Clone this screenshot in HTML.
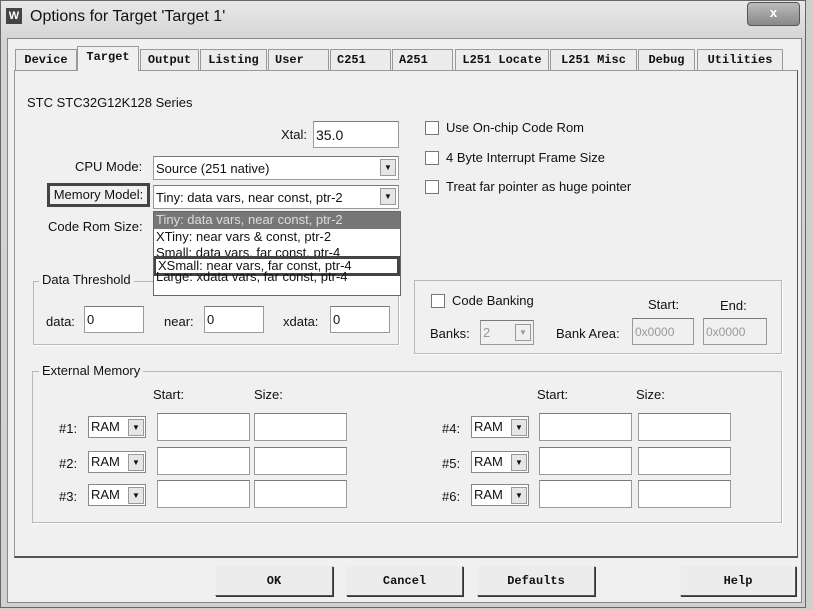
<!DOCTYPE html><html><head><style>
body{margin:0;width:813px;height:610px;background:#cfcfcf;position:relative;overflow:hidden;font-family:"Liberation Sans",sans-serif;font-size:13px;color:#111}
.a{position:absolute}
.inp{position:absolute;background:#fff;border:1px solid #9a9a9a;border-top-color:#7a7a7a;box-sizing:border-box;padding:0 2px;font-size:13px;display:flex;align-items:center}
.cb{position:absolute;width:12px;height:12px;background:#fff;border:1px solid #777}
.gb{position:absolute;border:1px solid #b8b8b8;box-shadow:1px 1px 0 #fff}
.lg{position:absolute;background:#f0f0f0;padding:0 3px}
.tab{position:absolute;top:49px;height:21px;border:1px solid #999;border-bottom:none;background:#ececec;font-family:"Liberation Mono",monospace;font-size:12px;line-height:20px;text-align:center;box-sizing:border-box;font-weight:bold}
.btn{position:absolute;top:566px;height:30px;border:1px solid #555;border-top-color:#eee;border-left-color:#eee;box-shadow:1px 1px 0 #333;background:#ececec;font-family:"Liberation Mono",monospace;font-size:12px;line-height:28px;text-align:center;box-sizing:border-box;font-weight:bold}
.dd{position:absolute;width:16px;height:17px;background:#e6e6e6;border:1px solid #999;box-sizing:border-box;font-size:8px;text-align:center;line-height:16px}
.ram{position:absolute;width:58px;height:22px;border:1px solid #888;background:#fff;box-sizing:border-box;padding:2px 2px;font-size:13px}
.ram .dd{right:1px;top:2px}
</style></head><body>
<div class="a" style="left:0;top:0;width:806px;height:608px;background:linear-gradient(#e8e8e8,#d4d4d4 40px,#d0d0d0);border:1px solid #666;box-sizing:border-box"></div>
<div class="a" style="left:6px;top:8px;width:16px;height:16px;background:#444;color:#fff;font-size:11px;text-align:center;line-height:16px;font-weight:bold">W</div>
<div class="a" style="left:30px;top:8px;font-size:16px;color:#111">Options for Target 'Target 1'</div>
<div class="a" style="left:747px;top:2px;width:51px;height:22px;border:1px solid #555;border-radius:4px;background:linear-gradient(#bbb,#888);color:#fff;font-weight:bold;text-align:center;line-height:20px;font-size:13px">x</div>
<div class="a" style="left:7px;top:38px;width:795px;height:565px;background:#f0f0f0;border:1px solid #888;box-sizing:border-box"></div>
<div class="a" style="left:14px;top:70px;width:784px;height:488px;border:1px solid #999;border-right-color:#555;border-bottom:2px solid #555;box-sizing:border-box;background:#f0f0f0"></div>
<div class="tab" style="left:15px;width:62px">Device</div>
<div class="tab" style="left:77px;width:62px;top:46px;height:25px;background:#f0f0f0;z-index:2">Target</div>
<div class="tab" style="left:140px;width:59px">Output</div>
<div class="tab" style="left:200px;width:67px">Listing</div>
<div class="tab" style="left:268px;width:61px;text-align:left;padding-left:6px">User</div>
<div class="tab" style="left:330px;width:61px;text-align:left;padding-left:6px">C251</div>
<div class="tab" style="left:392px;width:61px;text-align:left;padding-left:6px">A251</div>
<div class="tab" style="left:455px;width:94px">L251 Locate</div>
<div class="tab" style="left:550px;width:87px">L251 Misc</div>
<div class="tab" style="left:638px;width:57px">Debug</div>
<div class="tab" style="left:697px;width:86px">Utilities</div>

<div class="a" style="left:27px;top:95px">STC STC32G12K128 Series</div>
<div class="a" style="left:281px;top:127px">Xtal:</div>
<div class="inp" style="left:313px;top:121px;width:86px;height:27px;font-size:14px">35.0</div>
<div class="a" style="left:75px;top:159px">CPU Mode:</div>
<div class="inp" style="left:153px;top:156px;width:246px;height:24px">Source (251 native)<div class="dd" style="right:2px;top:2px">▼</div></div>
<div class="a" style="left:47px;top:183px;width:103px;height:24px;border:3px solid #444;box-sizing:border-box;text-align:center;line-height:18px">Memory Model:</div>
<div class="inp" style="left:153px;top:185px;width:246px;height:24px">Tiny: data vars, near const, ptr-2<div class="dd" style="right:2px;top:2px">▼</div></div>
<div class="a" style="left:48px;top:219px">Code Rom Size:</div>
<div class="gb" style="left:33px;top:281px;width:364px;height:62px"></div>
<div class="lg" style="left:39px;top:272px">Data Threshold</div>
<div class="a" style="left:46px;top:314px">data:</div>
<div class="inp" style="left:84px;top:306px;width:60px;height:27px">0</div>
<div class="a" style="left:164px;top:314px">near:</div>
<div class="inp" style="left:204px;top:306px;width:60px;height:27px">0</div>
<div class="a" style="left:283px;top:314px">xdata:</div>
<div class="inp" style="left:330px;top:306px;width:60px;height:27px">0</div>
<div class="a" style="left:153px;top:211px;width:248px;height:85px;background:#fff;border:1px solid #666;box-sizing:border-box;font-size:13px;line-height:15px;overflow:hidden">
<div style="background:#777;color:#ddd;padding-left:2px;height:17px">Tiny: data vars, near const, ptr-2</div>
<div style="padding-left:2px;height:16px">XTiny: near vars &amp; const, ptr-2</div>
<div style="padding-left:2px;height:11px;overflow:hidden">Small: data vars, far const, ptr-4</div>
<div style="padding-left:2px;border:3px solid #444;margin-left:-1px;height:20px;box-sizing:border-box;line-height:14px">XSmall: near vars, far const, ptr-4</div>
<div style="padding-left:2px;margin-top:-7px">Large: xdata vars, far const, ptr-4</div>
</div>

<div class="cb" style="left:425px;top:121px"></div><div class="a" style="left:446px;top:120px">Use On-chip Code Rom</div>
<div class="cb" style="left:425px;top:151px"></div><div class="a" style="left:446px;top:150px">4 Byte Interrupt Frame Size</div>
<div class="cb" style="left:425px;top:180px"></div><div class="a" style="left:446px;top:179px">Treat far pointer as huge pointer</div>

<div class="gb" style="left:414px;top:280px;width:366px;height:72px"></div>
<div class="cb" style="left:431px;top:294px"></div><div class="a" style="left:452px;top:293px">Code Banking</div>
<div class="a" style="left:648px;top:297px">Start:</div><div class="a" style="left:720px;top:298px">End:</div>
<div class="a" style="left:430px;top:326px">Banks:</div>
<div class="inp" style="left:480px;top:320px;width:54px;height:25px;background:#f0f0f0;color:#999">2<div class="dd" style="right:2px;top:3px;color:#999;background:#f0f0f0">▼</div></div>
<div class="a" style="left:556px;top:326px">Bank Area:</div>
<div class="inp" style="left:632px;top:318px;width:62px;height:27px;background:#f0f0f0;color:#999;font-size:12px">0x0000</div>
<div class="inp" style="left:703px;top:318px;width:64px;height:27px;background:#f0f0f0;color:#999;font-size:12px">0x0000</div>

<div class="gb" style="left:32px;top:371px;width:748px;height:150px"></div>
<div class="lg" style="left:39px;top:363px">External Memory</div>
<div class="a" style="left:153px;top:387px">Start:</div><div class="a" style="left:254px;top:387px">Size:</div>
<div class="a" style="left:537px;top:387px">Start:</div><div class="a" style="left:636px;top:387px">Size:</div>

<div class="a" style="left:59px;top:421px">#1:</div><div class="ram" style="left:88px;top:416px">RAM<div class="dd">▼</div></div>
<div class="inp" style="left:157px;top:413px;width:93px;height:28px"></div><div class="inp" style="left:254px;top:413px;width:93px;height:28px"></div>
<div class="a" style="left:59px;top:456px">#2:</div><div class="ram" style="left:88px;top:451px">RAM<div class="dd">▼</div></div>
<div class="inp" style="left:157px;top:447px;width:93px;height:28px"></div><div class="inp" style="left:254px;top:447px;width:93px;height:28px"></div>
<div class="a" style="left:59px;top:489px">#3:</div><div class="ram" style="left:88px;top:484px">RAM<div class="dd">▼</div></div>
<div class="inp" style="left:157px;top:480px;width:93px;height:28px"></div><div class="inp" style="left:254px;top:480px;width:93px;height:28px"></div>

<div class="a" style="left:442px;top:421px">#4:</div><div class="ram" style="left:471px;top:416px">RAM<div class="dd">▼</div></div>
<div class="inp" style="left:539px;top:413px;width:93px;height:28px"></div><div class="inp" style="left:638px;top:413px;width:93px;height:28px"></div>
<div class="a" style="left:442px;top:456px">#5:</div><div class="ram" style="left:471px;top:451px">RAM<div class="dd">▼</div></div>
<div class="inp" style="left:539px;top:447px;width:93px;height:28px"></div><div class="inp" style="left:638px;top:447px;width:93px;height:28px"></div>
<div class="a" style="left:442px;top:489px">#6:</div><div class="ram" style="left:471px;top:484px">RAM<div class="dd">▼</div></div>
<div class="inp" style="left:539px;top:480px;width:93px;height:28px"></div><div class="inp" style="left:638px;top:480px;width:93px;height:28px"></div>

<div class="btn" style="left:215px;width:118px">OK</div>
<div class="btn" style="left:346px;width:117px">Cancel</div>
<div class="btn" style="left:477px;width:118px">Defaults</div>
<div class="btn" style="left:680px;width:116px">Help</div>
</body></html>
